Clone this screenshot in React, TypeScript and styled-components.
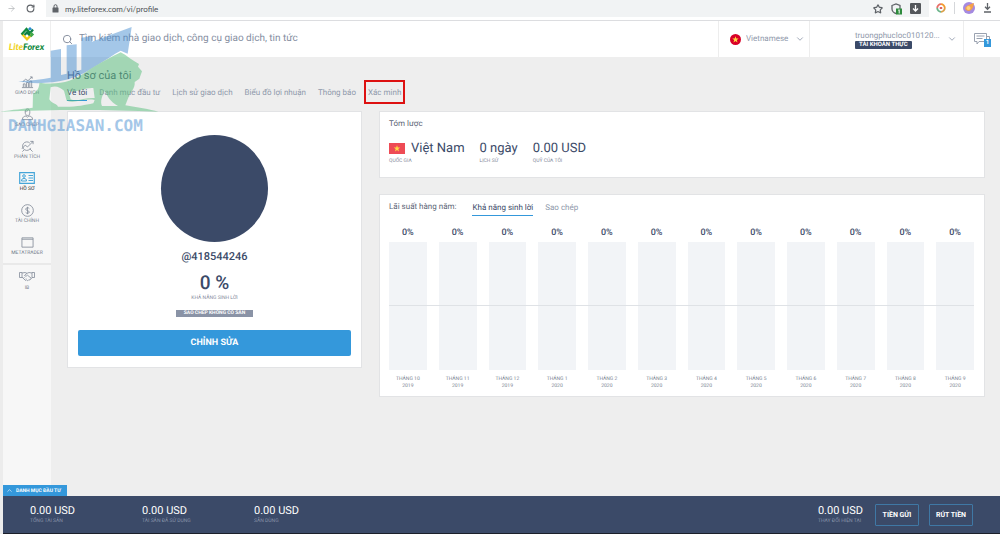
import React from "react";
import styled, { createGlobalStyle, css } from "styled-components";
import { ArrowRight, RotateCw, Star, ChevronDown, ChevronUp, Search } from "lucide-react";

const navy = "#3b4a68";
const blue = "#3498db";
const muted = "#8f99ab";

const Global = createGlobalStyle`
  * { box-sizing: border-box; }
  body { margin: 0; background: #eeeeee; font-family: Roboto, "Noto Sans", sans-serif; color: ${navy}; text-rendering: geometricPrecision; }
  button, input, select { font-family: inherit; border: 0; background: none; padding: 0; margin: 0; color: inherit; text-rendering: inherit; }
  button, select { cursor: pointer; }
  a { color: inherit; text-decoration: none; }
  h1, h2, p { margin: 0; font-weight: 400; }
  svg { display: block; flex: none; }
`;

const Page = styled.div`
  position: relative;
  min-height: 100vh;
  display: flex;
  flex-direction: column;
`;

const BrowserBar = styled.div`
  height: 21px;
  display: flex;
  align-items: flex-start;
  background: #fff;
  border-bottom: 1px solid #dcdde0;
  color: #5f6368;
`;
const NavButtons = styled.div`
  width: 46px;
  height: 16px;
  padding-left: 7px;
  display: flex;
  align-items: center;
  gap: 10px;
`;
const AddressBar = styled.div`
  flex: 1;
  height: 17px;
  padding: 0 8px 0 6px;
  display: flex;
  align-items: center;
  gap: 6px;
  background: #f1f3f4;
`;
const Address = styled.input`
  flex: 1;
  height: 16px;
  font-family: Lato, sans-serif;
  font-size: 8px;
  color: #505357;
  outline: none;
`;
const BarIcons = styled.div`
  height: 16px;
  display: flex;
  align-items: center;
  gap: 8px;
`;
const Extensions = styled(BarIcons)`
  padding: 0 8px 0 7px;
`;
const Divider = styled.span`
  width: 1px;
  height: 12px;
  background: #d5d7da;
`;

const Shell = styled.div`
  flex: 1;
  display: flex;
  flex-direction: column;
  border-left: 3px solid #ececec;
`;
const Header = styled.header`
  height: 36px;
  display: flex;
  background: #fff;
`;
const LogoLink = styled.a`
  width: 48px;
  padding-top: 6px;
  display: flex;
  flex-direction: column;
  align-items: center;
  border-right: 1px solid #efefef;
`;
const LogoText = styled.span`
  font-family: Lato, sans-serif;
  font-size: 9px;
  line-height: 10px;
  font-weight: 900;
  font-style: italic;
  color: #118a3e;
  i { color: #f0d21c; }
`;
const SearchBox = styled.label`
  flex: 1;
  padding-left: 11px;
  display: flex;
  align-items: center;
  gap: 6px;
  color: #7d8696;
`;
const SearchInput = styled.input`
  flex: 1;
  font-size: 10px;
  line-height: 16px;
  outline: none;
  &::placeholder { color: #858e9f; opacity: 1; }
`;
const LanguageCell = styled.div`
  width: 91px;
  padding: 0 4px 0 11px;
  display: flex;
  align-items: center;
  gap: 5px;
  border-left: 1px solid #ededed;
  color: ${muted};
`;
const LanguageSelect = styled.select`
  flex: 1;
  min-width: 0;
  appearance: none;
  font-size: 8px;
  line-height: 12px;
  color: ${muted};
`;
const AccountButton = styled.button`
  width: 154px;
  padding: 0 6px 0 45px;
  display: flex;
  align-items: center;
  justify-content: space-between;
  border-left: 1px solid #ededed;
  text-align: left;
  color: ${muted};
`;
const AccountName = styled.span`
  display: block;
  font-size: 8px;
  line-height: 11px;
`;
const AccountType = styled.span`
  display: table;
  padding: 0 4px;
  border-radius: 1px;
  background: ${navy};
  color: #fff;
  font-size: 6px;
  line-height: 8px;
  font-weight: 700;
`;
const ChatButton = styled.button`
  position: relative;
  width: 37px;
  padding-left: 10px;
  border-left: 1px solid #ededed;
  color: #9aa2b0;
`;
const ChatBadge = styled.span`
  position: absolute;
  right: 9px;
  bottom: 10px;
  width: 7px;
  height: 8px;
  background: ${blue};
  color: #fff;
  font-size: 6px;
  line-height: 8px;
  font-weight: 700;
  text-align: center;
`;

const Body = styled.div`
  flex: 1;
  display: flex;
`;
const Sidebar = styled.nav`
  width: 48px;
  flex: none;
  background: #f7f7f7;
`;
const SideGroup = styled.div`
  padding: 19px 0 6px;
  display: flex;
  flex-direction: column;
  gap: 11px;
  & + & { padding-top: 6px; border-top: 2px solid #e9e9e9; }
`;
const SideLink = styled.a<{ $active?: boolean }>`
  height: 21px;
  display: flex;
  flex-direction: column;
  align-items: center;
  justify-content: space-between;
  font-size: 5px;
  line-height: 7px;
  color: ${(p) => (p.$active ? "#222" : "#747d8c")};
  svg { color: ${(p) => (p.$active ? "#45a5d8" : "#838b99")}; }
`;

const Main = styled.main`
  flex: 1;
  min-width: 0;
  padding: 11px 15px 20px 16px;
`;
const Title = styled.h1`
  font-size: 11px;
  line-height: 16px;
  color: #46536c;
`;
const Tabs = styled.nav`
  margin-top: 2px;
  display: flex;
  gap: 12px;
`;
const Tab = styled.a<{ $active?: boolean; $marked?: boolean }>`
  position: relative;
  font-size: 8px;
  line-height: 13px;
  padding-bottom: 1px;
  color: ${(p) => (p.$active ? navy : muted)};
  border-bottom: 1px solid ${(p) => (p.$active ? blue : "transparent")};
  ${(p) =>
    p.$marked &&
    css`
      &::after {
        content: "";
        position: absolute;
        inset: -6px -4px -4px -4px;
        border: 2px solid #dd1111;
      }
    `}
`;

const Columns = styled.div`
  margin-top: 10px;
  display: grid;
  grid-template-columns: 295fr 606fr;
  gap: 17px;
  align-items: start;
`;
const Stack = styled.div`
  min-width: 0;
  display: flex;
  flex-direction: column;
  gap: 16px;
`;
const Card = styled.section`
  background: #fff;
  border: 1px solid #e2e3e5;
`;
const ProfileCard = styled(Card)`
  padding: 23px 10px 11px;
  display: flex;
  flex-direction: column;
  align-items: center;
`;
const Avatar = styled.div`
  width: 107px;
  height: 107px;
  border-radius: 50%;
  background: ${navy};
`;
const UserName = styled.p`
  margin-top: 7px;
  font-size: 11px;
  line-height: 16px;
  font-weight: 500;
`;
const Percent = styled.p`
  margin-top: 7px;
  font-size: 19px;
  line-height: 22px;
  font-weight: 500;
`;
const SmallLabel = styled.span`
  display: block;
  font-size: 5px;
  line-height: 8px;
  color: #7f8899;
`;
const CopyBadge = styled.span`
  margin: 8px 0 13px;
  padding: 0 8px;
  background: #8a93a6;
  color: #fff;
  font-size: 5px;
  line-height: 7px;
  font-weight: 700;
`;
const EditButton = styled.button`
  width: 100%;
  height: 26px;
  border-radius: 2px;
  background: ${blue};
  color: #fff;
  font-size: 9px;
  font-weight: 700;
`;

const SummaryCard = styled(Card)`
  padding: 6px 9px 12px;
`;
const CardTitle = styled.h2`
  font-size: 8px;
  line-height: 12px;
  color: #5c6575;
`;
const Facts = styled.div`
  margin-top: 10px;
  display: flex;
  gap: 15px;
`;
const FactValue = styled.p`
  display: flex;
  align-items: center;
  gap: 6px;
  font-size: 13px;
  line-height: 17px;
`;

const ChartCard = styled(Card)`
  padding: 6px 10px 6px 9px;
`;
const ChartHead = styled.div`
  display: flex;
  align-items: flex-start;
  gap: 16px;
`;
const ChartTabs = styled.nav`
  display: flex;
  gap: 12px;
`;
const Chart = styled.div`
  margin-top: 11px;
  display: grid;
  grid-template-columns: repeat(12, 1fr);
  column-gap: 12px;
`;
const Month = styled.div`
  display: flex;
  flex-direction: column;
  text-align: center;
`;
const MonthValue = styled.span`
  font-size: 9px;
  line-height: 12px;
  font-weight: 500;
`;
const Bar = styled.div`
  position: relative;
  height: 128px;
  margin: 3px 0 6px;
  background: #f2f4f7;
  &::after {
    content: "";
    position: absolute;
    top: calc(50% - 1px);
    left: 0;
    right: -12px;
    height: 1px;
    background: #dfe2e6;
  }
  ${Month}:last-child &::after { right: 0; }
`;
const MonthLabel = styled.span`
  font-size: 5px;
  line-height: 7px;
  color: #747d8c;
`;

const Footer = styled.footer`
  position: relative;
  min-height: 38px;
  padding: 8px 27px 0;
  display: flex;
  align-items: flex-start;
  background: ${navy};
  border-bottom: 1px solid #1b1f2a;
  color: #fff;
`;
const PortfolioTab = styled.button`
  position: absolute;
  left: 0;
  top: -11px;
  height: 11px;
  padding: 0 6px 0 3px;
  display: flex;
  align-items: center;
  gap: 3px;
  background: ${blue};
  color: #fff;
  font-size: 5px;
  font-weight: 700;
`;
const Balance = styled.div<{ $last?: boolean }>`
  width: ${(p) => (p.$last ? "auto" : "112px")};
  margin-left: ${(p) => (p.$last ? "auto" : "0")};
  margin-right: ${(p) => (p.$last ? "12px" : "0")};
  ${SmallLabel} { color: #8a95aa; }
`;
const BalanceValue = styled.p`
  font-size: 11px;
  line-height: 13px;
`;
const FooterButton = styled.button`
  width: 44px;
  height: 22px;
  border: 1px solid #3f78a5;
  border-radius: 1px;
  color: #fff;
  font-size: 7px;
  font-weight: 700;
  & + & { margin-left: 10px; }
`;

const Watermark = styled.div`
  position: absolute;
  left: 0;
  top: 22px;
  width: 160px;
  opacity: 0.5;
  pointer-events: none;
`;
const WatermarkText = styled.p`
  padding-left: 8px;
  color: #4b90d2;
  font: 700 16px/20px "DejaVu Sans Mono", monospace;
`;

const Flag = ({ round }: { round?: boolean }) => (
  <svg width={round ? 11 : 16} height="11" viewBox={round ? "2.5 0 11 11" : "0 0 16 11"}>
    {round ? <circle cx="8" cy="5.5" r="5.5" fill="#d80027" /> : <rect width="16" height="11" fill="#ee4b55" />}
    <path d="M8 2.2l.8 2.3h2.4L9.3 6l.7 2.4L8 7 6 8.4 6.7 6 4.8 4.5h2.4z" fill="#ffda44" />
  </svg>
);

const Logo = () => (
  <svg width="16" height="15" viewBox="0 0 16 15" fill="none" strokeWidth="2.3">
    <path d="M3 7L8 12.3l5-5" stroke="#f3c91a" />
    <path d="M2.5 7.5L7.5 2l3.5 4" stroke="#118a3e" />
    <path d="M5.5 8L8 5.5l2 2 4-5" stroke="#0d7f45" />
    <path d="M9.5 2.5L11 1l1.5 1.5" stroke="#2c8fd0" strokeWidth="1.5" />
    <path d="M11.5 5.5l2 2-2 2" stroke="#3fa84a" />
  </svg>
);

const sideIcons: Record<string, React.ReactNode> = {
  trade: <path d="M1 12.5h12M2.5 12V8.500h2V12M6 12V7h2v5M9.5 12V5.500h2V12M2 6l3-2.500 2.500 1.500L12 1M9.800 1H12v2" />,
  copy: <path d="M4.5 4c0-4 5-4 5 0s-1 4-2.500 4-2.500-1-2.500-4zM1.500 12.500c0-3 2-3.500 4-4l1.500 1.500 1.500-1.500c2 .5 4 1 4 4zM4.500 3.500c2 0 3-.5 3.500-1.500" />,
  analysis: <path d="M9.5 3.300a4.600 4.600 0 1 0 1 5.200M9.500 9.500l3 3M1 9.500l3.500-4 2.500 2L13 1.500M10 1.500h3v3M1.500 12.500l2-2" />,
  finance: (
    <>
      <circle cx="7" cy="7" r="6.300" />
      <path d="M9 5C8.500 3.700 5 3.700 5 5.500S9 7 9 8.700 5.500 10.300 5 9M7 3v8" />
    </>
  ),
  meta: <path d="M1 2h12v10H1zM1 3.500h12" />,
};

const SideIcon = ({ name }: { name: string }) => {
  if (name === "profile")
    return (
      <svg width="16" height="12" viewBox="0 0 16 12" fill="none" stroke="currentColor">
        <path d="M.7.7h14.600v10.600H.7z" strokeWidth="1.200" />
        <circle cx="5" cy="4" r="1.300" />
        <path d="M2.500 9c0-2 1-2.500 2.500-2.500S7.500 7 7.500 9zM9.500 3.500H14M9.500 6H14M9.500 8.500H14" />
      </svg>
    );
  if (name === "hands")
    return (
      <svg width="16" height="11" viewBox="0 0 16 11" fill="none" stroke="currentColor" strokeWidth=".8">
        <path d="M.5 1.500H3v5H.5zM15.500 1.500H13v5h2.500zM3 2l3-.5 2 .8 2-.8 3 .5M8 2.300L5.500 4.500c.8 1 2 .7 3-.3L12.500 7.500M3 6l3.500 3.500 1-.7 1.200 1 1-1 1.300.2.800-1.200 1.200-1.300M4.500 7.200l1-1M6 8.500l1-1" />
      </svg>
    );
  return (
    <svg width="13" height="13" viewBox="0 0 14 14" fill="none" stroke="currentColor" strokeWidth=".9">
      {sideIcons[name]}
    </svg>
  );
};

const sideItems = [
  ["trade", "GIAO DỊCH"],
  ["copy", "SAO CHÉP"],
  ["analysis", "PHÂN TÍCH"],
  ["profile", "HỒ SƠ"],
  ["finance", "TÀI CHÍNH"],
  ["meta", "METATRADER"],
];
const tabs = ["Về tôi", "Danh mục đầu tư", "Lịch sử giao dịch", "Biểu đồ lợi nhuận", "Thông báo", "Xác minh"];
const months = [
  [10, 2019], [11, 2019], [12, 2019], [1, 2020], [2, 2020], [3, 2020],
  [4, 2020], [5, 2020], [6, 2020], [7, 2020], [8, 2020], [9, 2020],
];
const balances = [
  ["0.00 USD", "TỔNG TÀI SẢN"],
  ["0.00 USD", "TÀI SẢN ĐÃ SỬ DỤNG"],
  ["0.00 USD", "SẴN DÙNG"],
];

export default function App() {
  return (
    <Page>
      <Global />
      <BrowserBar>
        <NavButtons>
          <ArrowRight size={9} color="#b4b7ba" />
          <RotateCw size={9} strokeWidth={3} />
        </NavButtons>
        <AddressBar>
          <svg width="7" height="9" viewBox="0 0 7 9">
            <rect x=".5" y="3.500" width="6" height="5" rx=".5" fill="#5f6368" />
            <path d="M2 4V2.200a1.500 1.500 0 0 1 3 0V4" fill="none" stroke="#5f6368" />
          </svg>
          <Address aria-label="Address" defaultValue="my.liteforex.com/vi/profile" />
          <BarIcons>
            <Star size={10} strokeWidth={3} />
            <svg width="11" height="12" viewBox="0 0 11 12">
              <path d="M1 2.500L5 1l4 1.500V6c0 2-2 4-4 4.500C3 10 1 8 1 6z" fill="none" stroke="#5f6368" strokeWidth="1.300" />
              <rect x="5" y="5.500" width="6" height="6" fill="#2e8b3d" />
              <path d="M7.300 7.300l.9-.6v3.800" fill="none" stroke="#fff" />
            </svg>
            <svg width="11" height="11" viewBox="0 0 11 11">
              <rect width="11" height="11" rx="1" fill="#55585c" />
              <path d="M5.500 2v6M3 5.500L5.500 8 8 5.500" fill="none" stroke="#fff" strokeWidth="1.300" />
            </svg>
          </BarIcons>
        </AddressBar>
        <Extensions>
          <svg width="10" height="10" viewBox="0 0 10 10" fill="none" strokeWidth="1.800">
            <path d="M5 1.200A3.800 3.800 0 0 0 1.200 5" stroke="#e8706a" />
            <path d="M5 1.200A3.800 3.800 0 0 1 8.800 5" stroke="#f39a2d" />
            <path d="M1.200 5A3.800 3.800 0 0 0 5 8.800" stroke="#6bb48a" />
            <path d="M5 8.800A3.800 3.800 0 0 0 8.800 5" stroke="#d9a04a" />
            <path d="M3.800 5h2.400" stroke="#d9534f" />
          </svg>
          <Divider />
          <svg width="12" height="12" viewBox="0 0 12 12">
            <circle cx="6" cy="6" r="6" fill="#a58ae0" />
            <path d="M2 6c2-3 6-4 9-5-.5 3-1 7-5 8-2 0-4-1-4-3z" fill="#f6a04a" />
            <circle cx="5.500" cy="6" r="2" fill="#ffd27a" />
          </svg>
          <svg width="9" height="10" viewBox="0 0 9 10" fill="none" stroke="#5f6368" strokeWidth="1.300">
            <path d="M4.500 0v6M2 3.800l2.500 2.500L7 3.800M1 9h7" />
          </svg>
        </Extensions>
      </BrowserBar>

      <Shell>
        <Header>
          <LogoLink href="#" aria-label="LiteForex">
            <Logo />
            <LogoText><i>Lite</i>Forex</LogoText>
          </LogoLink>
          <SearchBox>
            <Search size={11} />
            <SearchInput aria-label="Search" placeholder="Tìm kiếm nhà giao dịch, công cụ giao dịch, tin tức" />
          </SearchBox>
          <LanguageCell>
            <Flag round />
            <LanguageSelect aria-label="Language" defaultValue="vi">
              <option value="vi">Vietnamese</option>
            </LanguageSelect>
            <ChevronDown size={10} />
          </LanguageCell>
          <AccountButton>
            <span>
              <AccountName>truongphucloc010120...</AccountName>
              <AccountType>TÀI KHOẢN THỰC</AccountType>
            </span>
            <ChevronDown size={10} />
          </AccountButton>
          <ChatButton aria-label="Messages">
            <svg width="16" height="13" viewBox="0 0 16 13" fill="none" stroke="currentColor">
              <path d="M.5.5h12v8H5l-2 2.500V8.500H.5zM2.500 3h8M2.500 5.500h6M12.500 3.500h3v6" />
            </svg>
            <ChatBadge>1</ChatBadge>
          </ChatButton>
        </Header>

        <Body>
          <Sidebar>
            <SideGroup>
              {sideItems.map(([icon, label]) => (
                <SideLink key={icon} href="#" $active={icon === "profile"}>
                  <SideIcon name={icon} />
                  {label}
                </SideLink>
              ))}
            </SideGroup>
            <SideGroup>
              <SideLink href="#">
                <SideIcon name="hands" />
                IB
              </SideLink>
            </SideGroup>
          </Sidebar>

          <Main>
            <Title>Hồ sơ của tôi</Title>
            <Tabs>
              {tabs.map((t, i) => (
                <Tab key={t} href="#" $active={i === 0} $marked={i === 5}>{t}</Tab>
              ))}
            </Tabs>
            <Columns>
              <ProfileCard>
                <Avatar />
                <UserName>@418544246</UserName>
                <Percent>0 %</Percent>
                <SmallLabel>KHẢ NĂNG SINH LỜI</SmallLabel>
                <CopyBadge>SAO CHÉP KHÔNG CÓ SẴN</CopyBadge>
                <EditButton>CHỈNH SỬA</EditButton>
              </ProfileCard>
              <Stack>
                <SummaryCard>
                  <CardTitle>Tóm lược</CardTitle>
                  <Facts>
                    <div>
                      <FactValue><Flag />Việt Nam</FactValue>
                      <SmallLabel>QUỐC GIA</SmallLabel>
                    </div>
                    <div>
                      <FactValue>0 ngày</FactValue>
                      <SmallLabel>LỊCH SỬ</SmallLabel>
                    </div>
                    <div>
                      <FactValue>0.00 USD</FactValue>
                      <SmallLabel>QUỸ CỦA TÔI</SmallLabel>
                    </div>
                  </Facts>
                </SummaryCard>
                <ChartCard>
                  <ChartHead>
                    <CardTitle>Lãi suất hàng năm:</CardTitle>
                    <ChartTabs>
                      <Tab href="#" $active>Khả năng sinh lời</Tab>
                      <Tab href="#">Sao chép</Tab>
                    </ChartTabs>
                  </ChartHead>
                  <Chart>
                    {months.map(([m, y]) => (
                      <Month key={m}>
                        <MonthValue>0%</MonthValue>
                        <Bar />
                        <MonthLabel>THÁNG {m}</MonthLabel>
                        <MonthLabel>{y}</MonthLabel>
                      </Month>
                    ))}
                  </Chart>
                </ChartCard>
              </Stack>
            </Columns>
          </Main>
        </Body>

        <Footer>
          <PortfolioTab>
            <ChevronUp size={7} />
            DANH MỤC ĐẦU TƯ
          </PortfolioTab>
          {balances.map(([v, l]) => (
            <Balance key={l}>
              <BalanceValue>{v}</BalanceValue>
              <SmallLabel>{l}</SmallLabel>
            </Balance>
          ))}
          <Balance $last>
            <BalanceValue>0.00 USD</BalanceValue>
            <SmallLabel>THAY ĐỔI HIỆN TẠI</SmallLabel>
          </Balance>
          <FooterButton>TIỀN GỬI</FooterButton>
          <FooterButton>RÚT TIỀN</FooterButton>
        </Footer>
      </Shell>

      <Watermark>
        <svg width="160" height="94" viewBox="0 0 480 282">
          <path
            d="M55 178C90 176 125 172 152 167V86l31-5v78l17-4V70l30-3v80l14-4V47l32-4v16L395 15 383 95 362 86C320 108 270 152 205 172 150 186 95 186 55 178z"
            fill="#4b90d2"
          />
          <path
            fillRule="evenodd"
            d="M0 269C40 263 70 260 98 257L99 216C112 206 118 198 118 182 175 190 215 180 258 150 300 122 336 104 362 91 380 100 396 116 417 126L414 134 426 148 418 170 404 180C406 200 390 212 386 224L376 250C410 256 450 262 475 269 320 262 160 262 0 269zM152 196C168 190 180 196 192 206L200 236C225 246 250 228 284 234L280 244C250 250 230 256 174 254 170 244 156 246 148 232zM205 206C225 216 250 196 280 198L284 228C255 226 230 240 212 232zM314 206C322 222 330 238 354 252H306C300 238 306 222 314 206z"
            fill="#58bf7c"
          />
        </svg>
        <WatermarkText>DANHGIASAN.COM</WatermarkText>
      </Watermark>
    </Page>
  );
}
